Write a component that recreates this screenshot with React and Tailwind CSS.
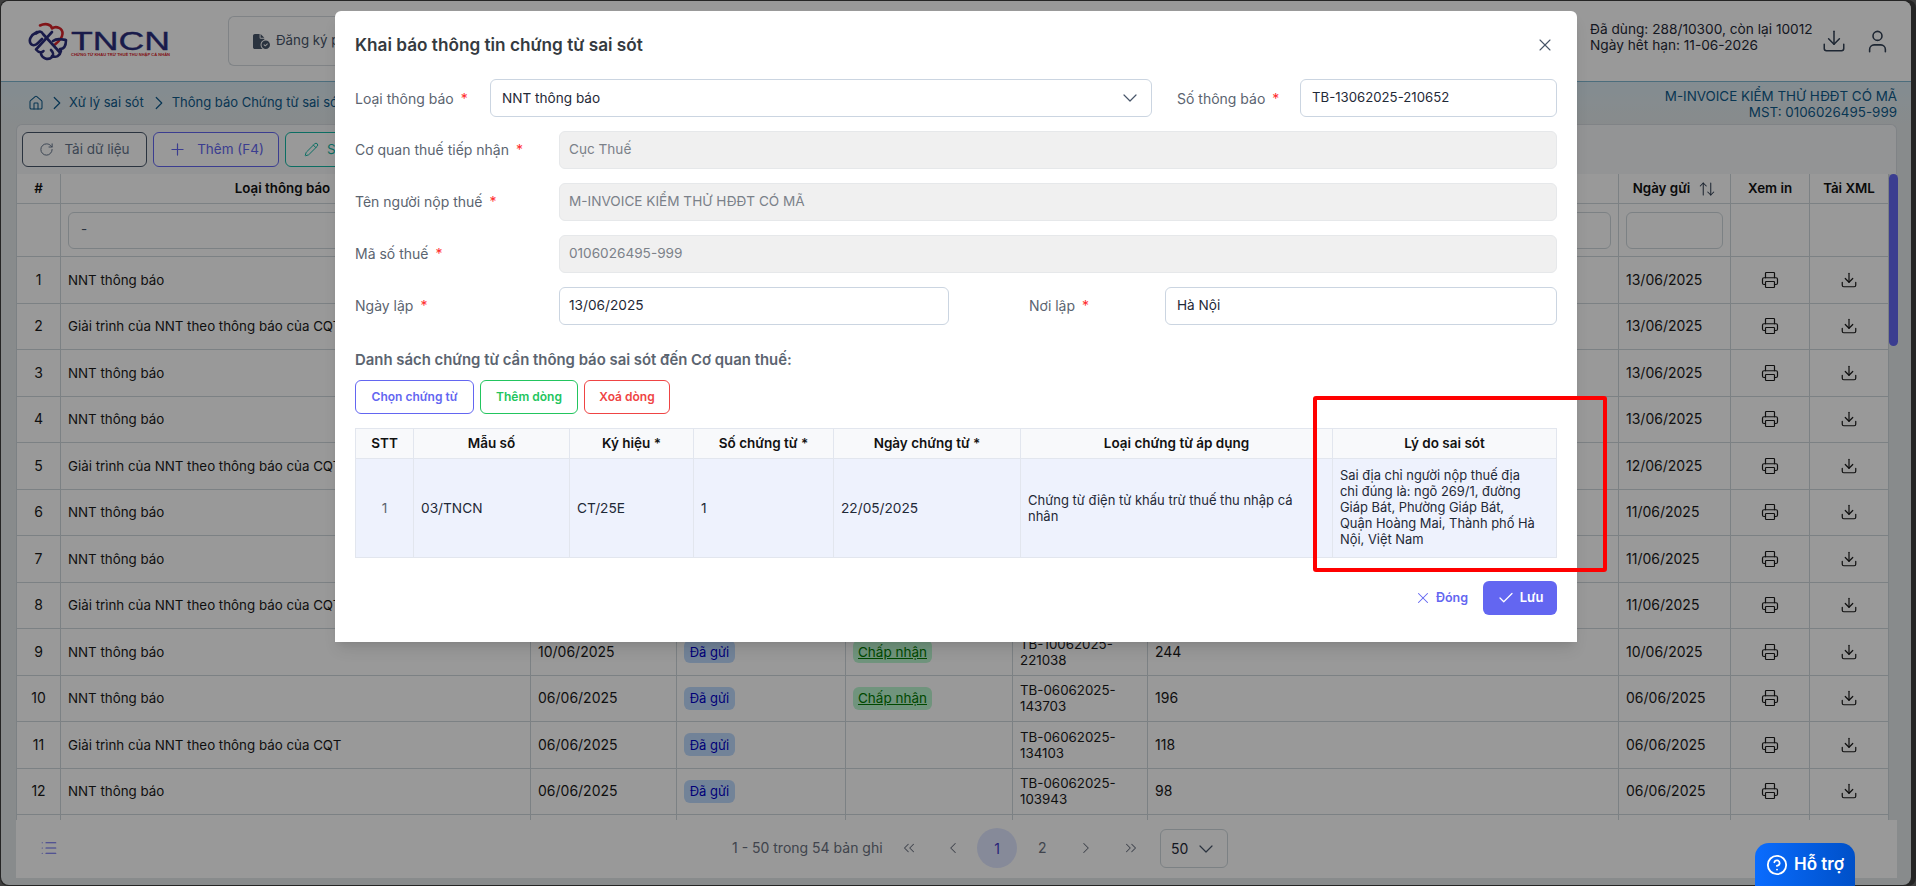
import React from "react";
import {
  House, ChevronRight, RotateCw, Plus, Pencil, X, Check, ChevronDown, Printer, Download, User,
  ArrowUpDown, List, ChevronsLeft, ChevronsRight, ChevronLeft, CircleHelp,
} from "lucide-react";
import { FaFileCircleCheck } from "react-icons/fa6";

const GIAI = "Giải trình của NNT theo thông báo của CQT";
const NNT = "NNT thông báo";
const rows = [
  { n: 1, t: NNT, g: "13/06/2025" },
  { n: 2, t: GIAI, g: "13/06/2025" },
  { n: 3, t: NNT, g: "13/06/2025" },
  { n: 4, t: NNT, g: "13/06/2025" },
  { n: 5, t: GIAI, g: "12/06/2025" },
  { n: 6, t: NNT, g: "11/06/2025" },
  { n: 7, t: NNT, g: "11/06/2025" },
  { n: 8, t: GIAI, g: "11/06/2025" },
  { n: 9, t: NNT, d: "10/06/2025", s: 1, c: 1, tb: "TB-10062025-221038", m: "244", g: "10/06/2025" },
  { n: 10, t: NNT, d: "06/06/2025", s: 1, c: 1, tb: "TB-06062025-143703", m: "196", g: "06/06/2025" },
  { n: 11, t: GIAI, d: "06/06/2025", s: 1, tb: "TB-06062025-134103", m: "118", g: "06/06/2025" },
  { n: 12, t: NNT, d: "06/06/2025", s: 1, tb: "TB-06062025-103943", m: "98", g: "06/06/2025" },
  { n: "", t: "", g: "" },
];

const GRID = "grid grid-cols-[44px_470px_146px_169px_167px_135px_471px_112px_79px_79px]";
const C = "border-r border-b border-[#cfd8dc] px-[7px] flex items-center min-w-0";

function Logo() {
  return (
    <svg width="144" height="40" viewBox="0 0 144 40" className="shrink-0">
      <g fill="none" strokeLinecap="round" strokeLinejoin="round">
        <path d="M12 3.5C17 1 23 2 24 6.5C28 3.5 35 6 34.5 12C34 17 30 20 27 22.5" stroke="#d8232a" strokeWidth="2.6" />
        <path d="M8 11.5C12 8 14 10 15 12L31 29.5" stroke="#2b2d7c" strokeWidth="2.6" />
        <path d="M24 10L8 27.5C11 31 14 31 15.5 29" stroke="#2b2d7c" strokeWidth="2.6" />
        <path d="M9 10C3 13 0 18 3 22C5 24 8 23 10 21L14 17" stroke="#2b2d7c" strokeWidth="2.6" />
        <path d="M13 32C14 36 20 39 24 35C26 33 25 30 23 28" stroke="#2b2d7c" strokeWidth="2.6" />
        <path d="M25 19C29 16 33 17 38 18C38 24 36 27 32 27" stroke="#2b2d7c" strokeWidth="2.6" />
        <path d="M24 34C28 36 32 34 33 29" stroke="#2b2d7c" strokeWidth="2.6" />
      </g>
      <text x="43" y="27.5" fontFamily="Liberation Sans" fontSize="25.5" fill="#2b2d7c" stroke="#2b2d7c" strokeWidth="0.35" textLength="99" lengthAdjust="spacingAndGlyphs">TNCN</text>
      <text x="43" y="34" fontFamily="Liberation Sans" fontSize="3.6" fontWeight="700" fill="#d8232a" textLength="99" lengthAdjust="spacingAndGlyphs">CHỨNG TỪ KHẤU TRỪ THUẾ THU NHẬP CÁ NHÂN</text>
    </svg>
  );
}

function TopBar() {
  return (
    <div className="h-[81px] shrink-0 bg-white border-b border-[#7fb6cf] flex items-start relative">
      <div className="ml-[27px] mt-[21px]"><Logo /></div>
      <div className="absolute left-[227px] top-[15px] h-[50px] w-[107px] overflow-hidden whitespace-nowrap rounded-l-md border border-r-0 border-[#d5dbe0] flex items-center pl-[24px] text-[13.3px] text-[#475569]">
        <FaFileCircleCheck size={17} className="mr-[6px] shrink-0 text-[#475569]" />
        Đăng ký p
      </div>
      <div className="absolute left-[1589px] top-[20px] text-[13.7px] leading-4 text-[#1f2937]">
        <div>Đã dùng: 288/10300, còn lại 10012</div>
        <div>Ngày hết hạn: 11-06-2026</div>
      </div>
      <Download size={26} strokeWidth={1.4} className="absolute left-[1820px] top-[27px] text-[#334155]" />
      <User size={27} strokeWidth={1.4} className="absolute left-[1863px] top-[27px] text-[#334155]" />
    </div>
  );
}

function Crumbs() {
  return (
    <div className="h-[42px] shrink-0 relative bg-gradient-to-b from-[#dbeaf2] to-[#e3e8ea] flex items-center pl-[27px] text-[13px] text-[#0e5a8a]">
      <House size={16} strokeWidth={1.6} />
      <ChevronRight size={22} strokeWidth={1.3} className="ml-[2px] mr-[1px]" />
      <span>Xử lý sai sót</span>
      <ChevronRight size={22} strokeWidth={1.3} className="ml-[4px] mr-[2px]" />
      <span>Thông báo Chứng từ sai sót</span>
      <div className="absolute right-[14px] top-[6px] text-right leading-4 text-[13.4px]">
        <div>M-INVOICE KIỂM THỬ HĐĐT CÓ MÃ</div>
        <div>MST: 0106026495-999</div>
      </div>
    </div>
  );
}

function Toolbar() {
  const b = "h-[35px] rounded-md border flex items-center text-[13.5px] bg-white";
  return (
    <div className="h-[50px] shrink-0 ml-[15px] mr-[14px] rounded-t-md border border-b-0 border-[#d5dbe0] bg-[#f5f7f8] flex items-center pl-[5px] gap-[6px]">
      <button className={`${b} w-[125px] border-[#475569] text-[#64748b] justify-center gap-[10px]`}><RotateCw size={15} strokeWidth={1.6} />Tải dữ liệu</button>
      <button className={`${b} w-[126px] border-[#6366f1] text-[#6366f1] justify-center gap-[10px]`}><Plus size={19} strokeWidth={1.5} />Thêm (F4)</button>
      <button className={`${b} w-[126px] border-[#14b8a6] text-[#14b8a6] pl-[18px] gap-[8px]`}><Pencil size={15} strokeWidth={1.6} />Sửa</button>
    </div>
  );
}

function DataTable() {
  return (
    <div className="ml-[15px] w-[1873px] h-[646px] overflow-hidden bg-white text-[13.33px] text-[#1a1a1a] shrink-0 border-l border-[#cfd8dc]">
      <div className={`${GRID} h-[30px] font-semibold text-[13.33px] text-[#111]`}>
        <div className={`${C} justify-center`}>#</div>
        <div className={`${C} justify-center gap-[8px]`}>Loại thông báo <ArrowUpDown size={18} strokeWidth={1.4} className="text-[#334155]" /></div>
        <div className={C} />
        <div className={C} />
        <div className={C} />
        <div className={C} />
        <div className={C} />
        <div className={`${C} justify-center gap-[8px]`}>Ngày gửi <ArrowUpDown size={18} strokeWidth={1.4} className="text-[#334155]" /></div>
        <div className={`${C} justify-center`}>Xem in</div>
        <div className={`${C} justify-center`}>Tải XML</div>
      </div>
      <div className={`${GRID} h-[53px]`}>
        <div className={C} />
        <div className={C}><div className="w-full h-[37px] rounded-md border border-[#cfd8dc] pl-[12px] flex items-center text-[#475569]">-</div></div>
        {[0, 1, 2, 3, 4].map((i) => (
          <div key={i} className={C}><div className="w-full h-[37px] rounded-md border border-[#cfd8dc]" /></div>
        ))}
        <div className={C}><div className="w-full h-[37px] rounded-md border border-[#cfd8dc]" /></div>
        <div className={C} />
        <div className={C} />
      </div>
      {rows.map((r, i) => (
        <div key={i} className={`${GRID} h-[46.5px] leading-4`}>
          <div className={`${C} justify-center text-[14px]`}>{r.n}</div>
          <div className={C}>{r.t}</div>
          <div className={`${C} text-[14px]`}>{r.d}</div>
          <div className={C}>
            {r.s ? <span className="h-[23px] w-[51px] rounded-md bg-[#bfdbfe] text-[#0000c8] text-[13px] flex items-center justify-center">Đã gửi</span> : null}
          </div>
          <div className={C}>
            {r.c ? <span className="h-[23px] w-[79px] rounded-md bg-[#bbf7d0] text-[#007a00] text-[13.5px] underline flex items-center justify-center">Chấp nhận</span> : null}
          </div>
          <div className={C}><span className="w-[110px]">{r.tb}</span></div>
          <div className={`${C} text-[14px]`}>{r.m}</div>
          <div className={`${C} text-[14px]`}>{r.g}</div>
          <div className={`${C} justify-center`}>{r.g ? <Printer size={18} strokeWidth={1.6} /> : null}</div>
          <div className={`${C} justify-center`}>{r.g ? <Download size={18} strokeWidth={1.6} /> : null}</div>
        </div>
      ))}
    </div>
  );
}

function Pager() {
  return (
    <div className="ml-[15px] w-[1881px] h-[58px] shrink-0 bg-white relative text-[14px] text-[#6b7280]">
      <List size={18} strokeWidth={1.6} className="absolute left-[24px] top-[19px] text-[#6366f1]" />
      <div className="absolute left-[716px] top-[20px] leading-4">1 - 50 trong 54 bản ghi</div>
      <ChevronsLeft size={18} strokeWidth={1.4} className="absolute left-[884px] top-[19px]" />
      <ChevronLeft size={18} strokeWidth={1.4} className="absolute left-[928px] top-[19px]" />
      <div className="absolute left-[961px] top-[8px] w-[40px] h-[40px] rounded-full bg-[#e0e7ff] flex items-center justify-center text-[#4338ca]">1</div>
      <div className="absolute left-[1022px] top-[20px] leading-4">2</div>
      <ChevronRight size={18} strokeWidth={1.4} className="absolute left-[1061px] top-[19px]" />
      <ChevronsRight size={18} strokeWidth={1.4} className="absolute left-[1106px] top-[19px]" />
      <div className="absolute left-[1144px] top-[9px] w-[68px] h-[39px] rounded-md border border-[#cfd8dc] flex items-center pl-[10px] text-[#1f2937]">
        50 <ChevronDown size={24} strokeWidth={1.2} className="ml-[6px] text-[#475569]" />
      </div>
    </div>
  );
}

function Label({ children }) {
  return <>{children}<span className="text-[#ff2d2d] ml-[7px]">*</span></>;
}

function Field({ label, value }) {
  return (
    <div className="flex items-center mt-[13px] h-[39px] text-[14px]">
      <div className="w-[204px] text-[#5b6470] shrink-0"><Label>{label}</Label></div>
      <div className="flex-1 h-[38px] rounded-md border border-[#e6e8ea] bg-[#f0f0f0] flex items-center pl-[9px] text-[13.6px] text-[#7b8189]">{value}</div>
    </div>
  );
}

function Dialog() {
  const th = "border-r border-[#e2e6ee] flex items-center justify-center";
  const td = "border-r border-[#e2e6ee] flex items-center px-[7px]";
  return (
    <div className="absolute left-[335px] top-[11px] w-[1242px] h-[631px] bg-white rounded-t-md shadow-lg px-[20px] text-[14px]">
      <div className="h-[68px] flex items-start pt-[24px] justify-between">
        <div className="text-[17.2px] leading-5 font-semibold text-[#343a40]">Khai báo thông tin chứng từ sai sót</div>
        <X size={20} strokeWidth={1.3} className="mr-[2px] text-[#475569]" />
      </div>
      <div className="flex items-center h-[38px]">
        <div className="w-[135px] text-[#5b6470] shrink-0"><Label>Loại thông báo</Label></div>
        <div className="w-[662px] h-[38px] rounded-md border border-[#cbd5e1] flex items-center pl-[11px] pr-[9px] justify-between text-[13.6px] text-[#1f2937]">
          NNT thông báo <ChevronDown size={24} strokeWidth={1.2} className="text-[#475569]" />
        </div>
        <div className="w-[123px] ml-[25px] text-[#5b6470] shrink-0 whitespace-nowrap"><Label>Số thông báo</Label></div>
        <div className="w-[257px] h-[38px] rounded-md border border-[#cbd5e1] flex items-center pl-[11px] text-[13.2px] text-[#1f2937]">TB-13062025-210652</div>
      </div>
      <Field label="Cơ quan thuế tiếp nhận" value="Cục Thuế" />
      <Field label="Tên người nộp thuế" value="M-INVOICE KIỂM THỬ HĐĐT CÓ MÃ" />
      <Field label="Mã số thuế" value="0106026495-999" />
      <div className="flex items-center mt-[13px] h-[39px]">
        <div className="w-[204px] text-[#5b6470] shrink-0"><Label>Ngày lập</Label></div>
        <div className="w-[390px] h-[38px] rounded-md border border-[#cbd5e1] flex items-center pl-[9px] text-[13.7px] text-[#1f2937]">13/06/2025</div>
        <div className="w-[136px] ml-[80px] text-[#5b6470] shrink-0 whitespace-nowrap"><Label>Nơi lập</Label></div>
        <div className="flex-1 h-[38px] rounded-md border border-[#cbd5e1] flex items-center pl-[11px] text-[13.6px] text-[#1f2937]">Hà Nội</div>
      </div>
      <div className="mt-[25px] leading-5 h-[20px] text-[14.9px] font-semibold text-[#5b6470]">Danh sách chứng từ cần thông báo sai sót đến Cơ quan thuế:</div>
      <div className="flex gap-[6px] mt-[10px] text-[12px] font-semibold">
        <button className="w-[119px] h-[34px] rounded-md border border-[#6366f1] text-[#6366f1]">Chọn chứng từ</button>
        <button className="w-[98px] h-[34px] rounded-md border border-[#22c55e] text-[#22c55e]">Thêm dòng</button>
        <button className="w-[86px] h-[34px] rounded-md border border-[#ef4444] text-[#ef4444]">Xoá dòng</button>
      </div>
      <div className="mt-[14px] border border-[#e2e6ee] w-[1202px]">
        <div className="grid grid-cols-[58px_156px_124px_140px_187px_312px_1fr] h-[30px] bg-[#f8f9fb] border-b border-[#e2e6ee] font-semibold text-[13.5px] text-[#111]">
          <div className={th}>STT</div>
          <div className={th}>Mẫu số</div>
          <div className={th}>Ký hiệu *</div>
          <div className={th}>Số chứng từ *</div>
          <div className={th}>Ngày chứng từ *</div>
          <div className={th}>Loại chứng từ áp dụng</div>
          <div className={`${th} border-r-0`}>Lý do sai sót</div>
        </div>
        <div className="grid grid-cols-[58px_156px_124px_140px_187px_312px_1fr] h-[98px] bg-[#eef2fd] leading-4 text-[13.7px] text-[#1f2937]">
          <div className={`${td} justify-center text-[#5b6470]`}>1</div>
          <div className={td}>03/TNCN</div>
          <div className={td}>CT/25E</div>
          <div className={td}>1</div>
          <div className={td}>22/05/2025</div>
          <div className={`${td} text-[13px]`}>Chứng từ điện tử khấu trừ thuế thu nhập cá nhân</div>
          <div className={`${td} border-r-0 text-[12.9px]`}>
            <div>Sai địa chỉ người nộp thuế địa<br />chỉ đúng là: ngõ 269/1, đường<br />Giáp Bát, Phường Giáp Bát,<br />Quận Hoàng Mai, Thành phố Hà<br />Nội, Việt Nam</div>
          </div>
        </div>
      </div>
      <div className="absolute right-[20px] top-[570px] flex items-center text-[12.5px] font-semibold">
        <span className="flex items-center gap-[4px] text-[#6366f1] mr-[15px]"><X size={18} strokeWidth={1.4} />Đóng</span>
        <button className="w-[74px] h-[34px] rounded-md bg-[#6366f1] text-white text-[13px] flex items-center justify-center gap-[5px]"><Check size={18} strokeWidth={1.7} />Lưu</button>
      </div>
    </div>
  );
}

export default function App() {
  return (
    <div className="relative w-[1916px] h-[886px] overflow-hidden bg-[#3f3f3f] [font-family:Inter,sans-serif]">
      <div className="absolute left-[1px] top-[1px] w-[1910px] h-[884px] rounded-lg overflow-hidden bg-[#e3e8ea] flex flex-col">
        <TopBar />
        <Crumbs />
        <Toolbar />
        <DataTable />
        <Pager />
        <div className="absolute left-[1888px] top-[173px] w-[9px] h-[172px] rounded-md bg-[#6366f1]" />
      </div>
      <div className="absolute inset-0 bg-black/40 rounded-lg" />
      <Dialog />
      <div className="absolute left-[1313px] top-[396px] w-[294px] h-[176px] border-[4px] border-[#ff0000] rounded-[3px]" />
      <div className="absolute left-[1755px] top-[843px] w-[100px] h-[43px] rounded-t-[14px] bg-gradient-to-r from-[#0a6cff] to-[#0050c8] flex items-center justify-center gap-[6px] text-white text-[17px] font-semibold">
        <CircleHelp size={22} strokeWidth={2} />Hỗ trợ
      </div>
    </div>
  );
}
